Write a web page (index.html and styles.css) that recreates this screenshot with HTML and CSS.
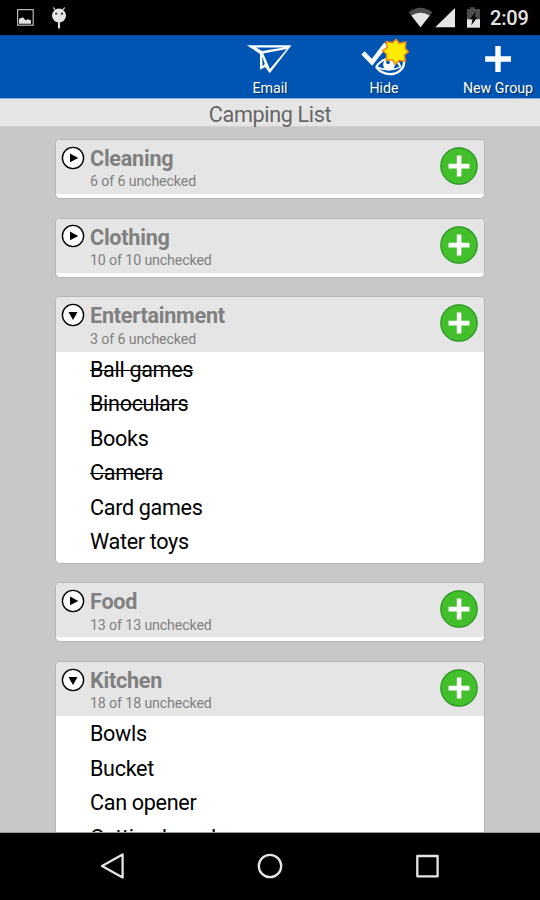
FILE: index.html
```html
<!DOCTYPE html>
<html lang="en">
<head>
<meta charset="utf-8">
<title>Camping List</title>
<link rel="stylesheet" href="styles.css">
</head>
<body>
<svg width="0" height="0" class="defs">
  <symbol id="closed" viewBox="0 0 24 24"><circle cx="12" cy="12" r="10.6" fill="#fff" stroke="#000" stroke-width="1.4"/><path d="M9 7.6 17.3 12 9 16.3z"/></symbol>
  <symbol id="open" viewBox="0 0 24 24"><circle cx="12" cy="12" r="10.6" fill="#fff" stroke="#000" stroke-width="1.4"/><path d="M7.5 9h9L12 17z"/></symbol>
  <symbol id="add" viewBox="0 0 38 38"><circle cx="19" cy="19" r="18.2" fill="#43bf2c" stroke="#289420" stroke-width="1.2"/><path d="M16.8 8.5h4.6v8.3H29.5v4.6h-8.1v8.1h-4.6v-8.1H8.5v-4.6h8.3z" fill="#fff"/></symbol>
</svg>
<div class="phone">
  <header class="status">
    <svg width="70" height="35" viewBox="0 0 70 35">
      <rect x="17.6" y="9.6" width="15.6" height="15.6" fill="none" stroke="#b9b9b9" stroke-width="1.2"/>
      <path d="M19 23.7V19l3-1.6 1.5.4 2 2.4 2.5-1 3 1.4v3.1z" fill="#e3e3e3"/>
      <circle cx="59" cy="15.6" r="7" fill="#e5e5e5"/>
      <path d="m53.3 7.5 2 2.4M64.7 7.5l-2 2.4" stroke="#ccc" stroke-width="1.2"/>
      <path d="M59 22v6.5" stroke="#ddd" stroke-width="2"/>
      <path d="M55.2 12.8h2v1.8h-2zM61 12.8h2v1.8h-2z" fill="#222"/>
    </svg>
    <div class="status-right">
      <svg width="74" height="35" viewBox="0 0 74 35">
        <path d="M.6 12.3Q12.4 3 24.4 12.3L12.5 27.3z" fill="#4c4c4c"/>
        <path d="M3.3 15.6Q12.5 9.7 21.8 15.6L12.5 27.3z" fill="#e5e5e5"/>
        <path d="M27.2 27.3 47 8v19.3z" fill="#e5e5e5"/>
        <path d="M59 9h3V7.3h4.8V9H72v10.3H59z" fill="#4c4c4c"/>
        <path d="M59 19.2h13v8.5H59z" fill="#e5e5e5"/>
        <path d="m68 11.2-6 8.1h2.6l-1.3 6 6.1-8h-2.7z" fill="#000"/>
      </svg>
      <span class="clock">2:09</span>
    </div>
  </header>
  <nav class="actions">
    <a class="action email">
      <svg width="50" height="40" viewBox="0 0 50 40">
        <path d="M1.8 9.2H46.5L24.7 37.2 20.2 31 15 33.8V18z" fill="#fff"/>
        <path d="M11 11.6h28L17 15zM41.8 13 24.9 33 18.3 17.5z" fill="#0055b3"/>
        <path d="m17.2 20.5 2.6 7.3-2.2 2.8z" fill="#0055b3"/>
      </svg>
      <span>Email</span>
    </a>
    <a class="action hide">
      <svg width="50" height="42" viewBox="0 0 50 42">
        <path d="M4 16.8 13 26.3 27 8" fill="none" stroke="#fff" stroke-width="4.6"/>
        <path d="M16.3 31Q29 16.5 42 25.5L46 25.5Q45.5 38.6 31.5 39 21.5 38.2 16.3 31z" fill="#0055b3"/>
        <path d="M17 31Q23 22 32 22.5 39 24 41.5 30.8" fill="none" stroke="#fff" stroke-width="2"/>
        <path d="M17 31Q22.5 38 31 38.2C39 38.2 46.5 31.5 44.8 25" fill="none" stroke="#fff" stroke-width="2.3"/>
        <path d="M18 31Q30 36.8 41.5 30.8" fill="none" stroke="#fff" stroke-width="1.4"/>
        <circle cx="30" cy="28.5" r="5.9" fill="#fff"/><circle cx="29" cy="26.3" r="1.9" fill="#0055b3"/>
        <path d="m37 3.3 3.3 4.1 6.4-1.5-.6 6.3 3.2 3.7-4 3.1 1 6.3-6.1-1-4 4.2-2.7-4.8-6.3.6.6-6-4.2-3.6 4.7-3.1-1-6 6.3 1.2z" fill="#ffec00" stroke="#f58a14" stroke-width="1.5"/>
      </svg>
      <span>Hide</span>
    </a>
    <a class="action group">
      <svg width="28" height="28" viewBox="0 0 28 28"><path d="M11.3 1h5.4v10.2H27v5.5H16.7V27h-5.4V16.7H1.2v-5.5h10.1z" fill="#fff"/></svg>
      <span>New Group</span>
    </a>
  </nav>
  <h1>Camping List</h1>
  <main class="groups">
    <section class="card">
      <div class="head"><svg class="toggle"><use href="#closed"/></svg><div class="label"><h2>Cleaning</h2><p>6 of 6 unchecked</p></div><svg class="add"><use href="#add"/></svg></div>
    </section>
    <section class="card">
      <div class="head"><svg class="toggle"><use href="#closed"/></svg><div class="label"><h2>Clothing</h2><p>10 of 10 unchecked</p></div><svg class="add"><use href="#add"/></svg></div>
    </section>
    <section class="card">
      <div class="head"><svg class="toggle"><use href="#open"/></svg><div class="label"><h2>Entertainment</h2><p>3 of 6 unchecked</p></div><svg class="add"><use href="#add"/></svg></div>
      <ul><li><s>Ball games</s></li><li><s>Binoculars</s></li><li>Books</li><li><s>Camera</s></li><li>Card games</li><li>Water toys</li></ul>
    </section>
    <section class="card">
      <div class="head"><svg class="toggle"><use href="#closed"/></svg><div class="label"><h2>Food</h2><p>13 of 13 unchecked</p></div><svg class="add"><use href="#add"/></svg></div>
    </section>
    <section class="card">
      <div class="head"><svg class="toggle"><use href="#open"/></svg><div class="label"><h2>Kitchen</h2><p>18 of 18 unchecked</p></div><svg class="add"><use href="#add"/></svg></div>
      <ul><li>Bowls</li><li>Bucket</li><li>Can opener</li><li>Cutting board</li></ul>
    </section>
  </main>
  <footer class="navbar">
    <svg width="26" height="28" viewBox="0 0 26 28"><path d="M22.6 2.4v23.2L2 14z"/></svg>
    <svg width="26" height="28" viewBox="0 0 26 28"><circle cx="13" cy="14" r="11.2"/></svg>
    <svg width="26" height="28" viewBox="0 0 26 28"><rect x="3.3" y="4" width="20.3" height="20.3"/></svg>
  </footer>
</div>
</body>
</html>
```
FILE: styles.css
```css
* { box-sizing: border-box; margin: 0; padding: 0; }
body { font-family: Roboto, "Liberation Sans", sans-serif; background: #000; }
svg { display: block; flex: none; }
.defs { display: none; }
.phone { width: 540px; height: 900px; display: flex; flex-direction: column; overflow: hidden; }
.status { height: 35px; flex: none; background: #000; display: flex; justify-content: space-between; }
.status-right { display: flex; padding-right: 11px; gap: 8px; }
.clock { color: #e5e5e5; font-size: 20px; font-weight: 500; line-height: 37px; width: 39px; white-space: nowrap; letter-spacing: -0.2px; }
.actions { height: 63px; flex: none; background: #0055b3; border-top: 1px solid #00499f; display: flex; justify-content: flex-end; }
.action { display: flex; flex-direction: column; align-items: center; justify-content: space-between; color: #fff; font-size: 14.2px; line-height: 18px; text-shadow: 1px 1px 1px #00000080; padding-bottom: 1px; white-space: nowrap; }
.email { width: 114px; }
.hide { width: 114px; }
.group { width: 84px; margin-left: 15px; }
.group span { margin-left: 0; }
.group svg { margin: 9px 1px 0 0; }
h1 { height: 29px; flex: none; background: #e5e5e5; border-top: 1px solid #8eaedb; border-bottom: 1px solid #d0d0d0; color: #666; font-size: 21.6px; letter-spacing: -0.35px; font-weight: 400; line-height: 31px; text-align: center; }
.groups { flex: 1; min-height: 0; overflow: hidden; background: #c8c8c8; padding: 11.75px 55px 0; display: flex; flex-direction: column; gap: 18.5px; border-bottom: 1px solid #999; }
.card { flex: none; background: #fff; border: 1px solid #b4b4b4; border-radius: 5px; padding-bottom: 4px; overflow: hidden; }
.head { height: 54.25px; background: #e5e5e5; display: flex; padding-left: 5px; padding-right: 6.5px; }
.toggle { width: 24px; height: 24px; margin-top: 5.8px; }
.label { flex: 1; padding: 6px 0 0 5px; color: #808080; }
h2 { font-size: 21.6px; letter-spacing: -0.25px; line-height: 26.6px; font-weight: 700; }
.label p { font-size: 14.2px; letter-spacing: -0.12px; line-height: 18px; }
.add { width: 38px; height: 38px; margin-top: 7px; }
ul { list-style: none; padding-left: 34px; }
li { height: 34.5px; font-size: 21.6px; letter-spacing: -0.33px; line-height: 36.8px; color: #000; }
s { text-decoration-thickness: 1px; }
.navbar { height: 67px; flex: none; background: #000; display: flex; justify-content: space-between; padding: 19px 100px 0 100px; }
.navbar svg { fill: none; stroke: #e5e5e5; stroke-width: 2.3; stroke-linejoin: round; }
```
